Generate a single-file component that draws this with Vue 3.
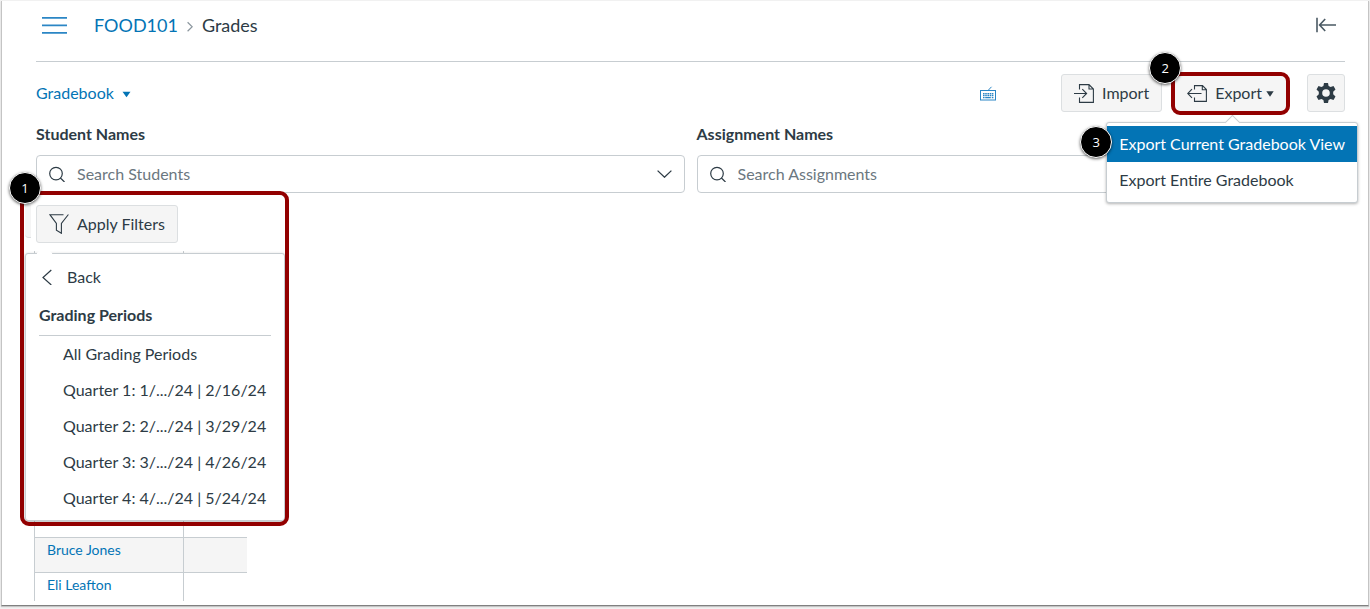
<script setup>
    import { ref } from "vue"

    const studentSearch = ref("")
    const assignmentSearch = ref("")

    const gradingPeriods = [
        "All Grading Periods",
        "Quarter 1: 1/.../24 | 2/16/24",
        "Quarter 2: 2/.../24 | 3/29/24",
        "Quarter 3: 3/.../24 | 4/26/24",
        "Quarter 4: 4/.../24 | 5/24/24",
    ]

    const exportOptions = ["Export Current Gradebook View", "Export Entire Gradebook"]
    const activeExport = ref(0)

    const students = ["Bruce Jones", "Eli Leafton"]
</script>

<template>
    <div class="page">
        <header class="header">
            <button class="icon-button" aria-label="Open course navigation">
                <svg width="25" height="18" viewBox="0 0 25 18" fill="none" stroke="#2b86c5" stroke-width="1.8">
                    <path d="M0 1.9H25M0 9.4H25M0 16.9H25" />
                </svg>
            </button>
            <nav class="breadcrumbs" aria-label="Breadcrumbs">
                <a href="#">FOOD101</a>
                <svg width="6" height="14" viewBox="0 0 6 14" fill="none" stroke="#8b969e" stroke-width="1.2">
                    <path d="M.6 4.2L5.2 8.7L.6 13.2" />
                </svg>
                <span>Grades</span>
            </nav>
            <button class="icon-button collapse" aria-label="Collapse">
                <svg width="21" height="16" viewBox="0 0 21 16" fill="none" stroke="#4a5963" stroke-width="1.6">
                    <path d="M1 .8V15.2M3.5 8H20M9.2 2L3.6 8L9.2 14" />
                </svg>
            </button>
        </header>

        <div class="toolbar">
            <button class="view-button">
                Gradebook
                <svg width="9" height="10" viewBox="0 0 9 10" fill="#0374b5"><path d="M.5 3.8H8.5L4.5 9.2Z" /></svg>
            </button>
            <button class="icon-button shortcuts" aria-label="View keyboard shortcuts">
                <svg width="17" height="15" viewBox="0 0 17 15" fill="none" stroke="#2b86c5">
                    <rect x=".5" y="4.5" width="15" height="9.5" />
                    <path d="M8 4.5L11.5 .8" />
                    <path d="M3 7.7H13.4" stroke-width="1.6" stroke-dasharray="1.6 .6" />
                    <path d="M3 9.7H13.4" stroke-width="1.2" stroke-dasharray="1.6 .6" />
                    <path d="M3 11.6H4.6M5.2 11.6H10.8M11.8 11.6H13.4" stroke-width="1.2" />
                </svg>
            </button>
            <button class="button">
                <svg width="20" height="19" viewBox="0 0 20 19" fill="none" stroke="#2d3b45" stroke-width="1.1">
                    <path d="M5.5 5.5V.6H15L19.4 5V18.4H5.5V13.5M15 .6V5H19.4M0 9.5H12.5M8.3 5.2L12.6 9.5L8.3 13.8" />
                </svg>
                Import
            </button>
            <div class="export">
                <button class="button" aria-haspopup="menu" aria-expanded="true">
                    <svg width="20" height="17" viewBox="0 0 20 17" fill="none" stroke="#2d3b45" stroke-width="1.1">
                        <path d="M7.5 4.5V.6H15.5L19.4 4.5V16.4H7.5V12.5M15.3 .6V4.7H19.4M.8 8.5H14.5M5 4.2L.7 8.5L5 12.8" />
                    </svg>
                    <span class="export-label">
                        Export
                        <svg width="8" height="8" viewBox="0 0 8 8" fill="#2d3b45"><path d="M.3 2.2H7.7L4 7.8Z" /></svg>
                    </span>
                </button>
                <div class="export-menu popover" role="menu">
                    <button
                        v-for="(option, index) in exportOptions"
                        :key="option"
                        class="menu-item"
                        :class="{ active: index === activeExport }"
                        role="menuitem"
                        @mouseenter="activeExport = index"
                    >
                        {{ option }}
                    </button>
                </div>
                <div class="highlight"></div>
                <span class="badge badge-two">2</span>
                <span class="badge badge-three">3</span>
            </div>
            <button class="button settings" aria-label="Gradebook settings">
                <svg width="20" height="20" viewBox="0 0 20 20" fill="#2d3b45" fill-rule="evenodd">
                    <path d="M8 0H12L12.6 3L14.6 4.1L17.5 3.1L19.5 6.6L17.2 8.7V11.3L19.5 13.4L17.5 16.9L14.6 15.9L12.6 17L12 20H8L7.4 17L5.4 15.9L2.5 16.9L.5 13.4L2.8 11.3V8.7L.5 6.6L2.5 3.1L5.4 4.1L7.4 3ZM10 6.2A3.8 3.8 0 1 0 10 13.8A3.8 3.8 0 1 0 10 6.2Z" />
                </svg>
            </button>
        </div>

        <div class="searches">
            <div class="field">
                <label for="student-search">Student Names</label>
                <div class="search-box">
                    <svg width="16" height="16" viewBox="0 0 16 16" fill="none" stroke="#2d3b45" stroke-width="1.2">
                        <circle cx="7" cy="7.6" r="6.3" /><path d="M11.4 12L15.5 16" />
                    </svg>
                    <input id="student-search" v-model="studentSearch" type="text" placeholder="Search Students">
                    <svg width="15" height="8" viewBox="0 0 15 8" fill="none" stroke="#2d3b45" stroke-width="1.3">
                        <path d="M.6.6L7.5 7.2L14.4.6" />
                    </svg>
                </div>
            </div>
            <div class="field">
                <label for="assignment-search">Assignment Names</label>
                <div class="search-box">
                    <svg width="16" height="16" viewBox="0 0 16 16" fill="none" stroke="#2d3b45" stroke-width="1.2">
                        <circle cx="7" cy="7.6" r="6.3" /><path d="M11.4 12L15.5 16" />
                    </svg>
                    <input id="assignment-search" v-model="assignmentSearch" type="text" placeholder="Search Assignments">
                    <svg width="15" height="8" viewBox="0 0 15 8" fill="none" stroke="#2d3b45" stroke-width="1.3">
                        <path d="M.6.6L7.5 7.2L14.4.6" />
                    </svg>
                </div>
            </div>
        </div>

        <div class="filters">
            <button class="button" aria-haspopup="menu" aria-expanded="true">
                <svg width="20" height="20" viewBox="0 0 20 20" fill="none" stroke="#2d3b45" stroke-width="1.1">
                    <path d="M14.5 .7H.9L7.4 9.5V16.2L12.4 19.3V9.5L19.4 .5" />
                </svg>
                Apply Filters
            </button>
            <div class="filter-menu popover">
                <button class="back">
                    <svg width="10" height="16" viewBox="0 0 10 16" fill="none" stroke="#2d3b45" stroke-width="1.2">
                        <path d="M9.3 1L1 8.5L9.3 16" />
                    </svg>
                    Back
                </button>
                <h2 class="menu-heading">Grading Periods</h2>
                <button v-for="period in gradingPeriods" :key="period" class="period">{{ period }}</button>
            </div>
            <div class="highlight"></div>
            <span class="badge badge-one">1</span>
        </div>

        <table class="students">
            <thead>
                <tr><th></th><th></th></tr>
            </thead>
            <tbody>
                <tr v-for="student in students" :key="student">
                    <td><a href="#">{{ student }}</a></td>
                    <td></td>
                </tr>
            </tbody>
        </table>
    </div>
</template>

<style>
    body {
        background-color: #f1f1f1;
    }
</style>

<style scoped>
    .page {
        box-sizing: border-box;
        margin: 1px 1px 2px;
        padding: 0 23px 4px 34px;
        background-color: white;
        border: 1px solid #c4c4c4;
        border-top: none;
        border-bottom: 1px solid #808080;
        box-shadow: 0 1px 1px #c4c4c4;
        color: #2d3b45;
        font-family: Lato, sans-serif;
        font-size: 16px;
        line-height: 24px;
    }

    button,
    input {
        font: inherit;
        color: inherit;
    }

    button {
        padding: 0;
        border: none;
        background: none;
        cursor: pointer;
    }

    a {
        color: #0374b5;
        text-decoration: none;
    }

    svg {
        display: block;
        flex: none;
    }

    .header {
        display: flex;
        align-items: center;
        height: 48px;
        padding: 0 8px 12px 6px;
        border-bottom: 1px solid #c7cdd1;
    }

    .breadcrumbs {
        display: flex;
        align-items: center;
        gap: 9px;
        margin-left: 27px;
        font-size: 18px;
    }

    .collapse {
        margin-left: auto;
    }

    .toolbar {
        display: flex;
        align-items: center;
        margin-top: 12px;
    }

    .view-button {
        display: flex;
        align-items: center;
        gap: 8px;
        margin-right: auto;
        color: #0374b5;
    }

    .shortcuts {
        margin-right: 64px;
    }

    .button {
        box-sizing: border-box;
        display: flex;
        align-items: center;
        gap: 8px;
        height: 38px;
        padding: 0 12px;
        background-color: #f5f5f5;
        border: 1px solid #dcdfe1;
        border-radius: 3px;
    }

    .export {
        position: relative;
        margin: 0 20px 0 12px;
    }

    .export-label {
        display: flex;
        align-items: center;
        gap: 4px;
    }

    .settings {
        width: 38px;
        padding: 0;
        justify-content: center;
    }

    .popover {
        box-sizing: border-box;
        position: absolute;
        z-index: 1;
        background-color: white;
        border: 1px solid #c7cdd1;
        border-radius: 3px;
        box-shadow: 0 1px 3px rgba(0, 0, 0, 0.3);
    }

    .popover::before {
        content: "";
        position: absolute;
        top: -6px;
        width: 10px;
        height: 10px;
        background-color: white;
        border: solid #c7cdd1;
        border-width: 1px 0 0 1px;
        transform: rotate(45deg);
    }

    .export-menu {
        top: 48px;
        right: -71px;
        padding: 3px 0 4px;
        white-space: nowrap;
    }

    .export-menu::before {
        left: 120px;
    }

    .menu-item {
        position: relative;
        display: block;
        width: 100%;
        padding: 6px 12px;
        text-align: left;
    }

    .menu-item.active {
        background-color: #0374b5;
        color: white;
    }

    .highlight {
        box-sizing: border-box;
        position: absolute;
        z-index: 2;
        border: 4px solid #920000;
        border-radius: 9px;
        pointer-events: none;
    }

    .export .highlight {
        inset: -2px -3px -3px;
    }

    .badge {
        box-sizing: border-box;
        position: absolute;
        z-index: 3;
        width: 32px;
        height: 32px;
        border: 1px solid white;
        border-radius: 50%;
        background-color: black;
        box-shadow: 0 1px 3px rgba(0, 0, 0, 0.6);
        color: white;
        font-family: "Open Sans", sans-serif;
        font-size: 13px;
        line-height: 30px;
        text-align: center;
    }

    .badge-two {
        top: -22px;
        left: -25px;
    }

    .badge-three {
        top: 52px;
        left: -94px;
    }

    .badge-one {
        top: -33px;
        left: -27px;
    }

    .searches {
        display: grid;
        grid-template-columns: 1fr 1fr;
        gap: 12px;
        margin-top: 10px;
    }

    .field label {
        display: block;
        margin-bottom: 9px;
        font-weight: bold;
    }

    .search-box {
        box-sizing: border-box;
        display: flex;
        align-items: center;
        gap: 12px;
        height: 38px;
        padding: 0 12px;
        border: 1px solid #c7cdd1;
        border-radius: 4px;
    }

    .search-box input {
        flex: 1;
        min-width: 0;
        padding: 0;
        border: none;
        outline: none;
        background: none;
    }

    .search-box input::placeholder {
        color: #6b7780;
        opacity: 1;
    }

    .filters {
        position: relative;
        width: fit-content;
        margin-top: 12px;
    }

    /* edge of the panel behind the filter button */
    .filters::before {
        content: "";
        position: absolute;
        top: 0;
        left: -11px;
        width: 6px;
        height: 32px;
        background-color: #f5f5f5;
        border-bottom: 1px solid #dcdfe1;
        border-radius: 0 0 0 4px;
    }

    .filter-menu {
        top: 48px;
        left: -11px;
        width: 260px;
        padding: 5px 13px 4px;
    }

    .filter-menu::before {
        left: 13px;
        border-color: white;
    }

    .filters .highlight {
        top: -14px;
        left: -16px;
        width: 269px;
        height: 335px;
    }

    .back {
        display: flex;
        align-items: center;
        gap: 15px;
        padding: 6px 3px;
    }

    .menu-heading {
        margin: 0;
        padding: 8px 0;
        border-bottom: 1px solid #c7cdd1;
        font-size: 16px;
    }

    .period {
        display: block;
        padding: 6px 0 6px 24px;
        white-space: nowrap;
    }

    .students {
        margin: 8px 0 0 -2px;
        border-collapse: collapse;
        font-size: 14px;
        line-height: 24px;
    }

    .students th {
        height: 286px;
        padding: 0;
    }

    .students th,
    .students td {
        border-left: 1px solid #c7cdd1;
    }

    .students td {
        box-sizing: border-box;
        width: 63px;
        height: 35px;
        padding: 0;
        border-top: 1px solid #c7cdd1;
        vertical-align: top;
    }

    .students td:first-child {
        width: 149px;
        padding-left: 12px;
    }

    .students tbody tr:first-child {
        background-color: #f5f5f5;
    }

    .students tbody tr:last-child td {
        height: 28px;
    }
</style>
